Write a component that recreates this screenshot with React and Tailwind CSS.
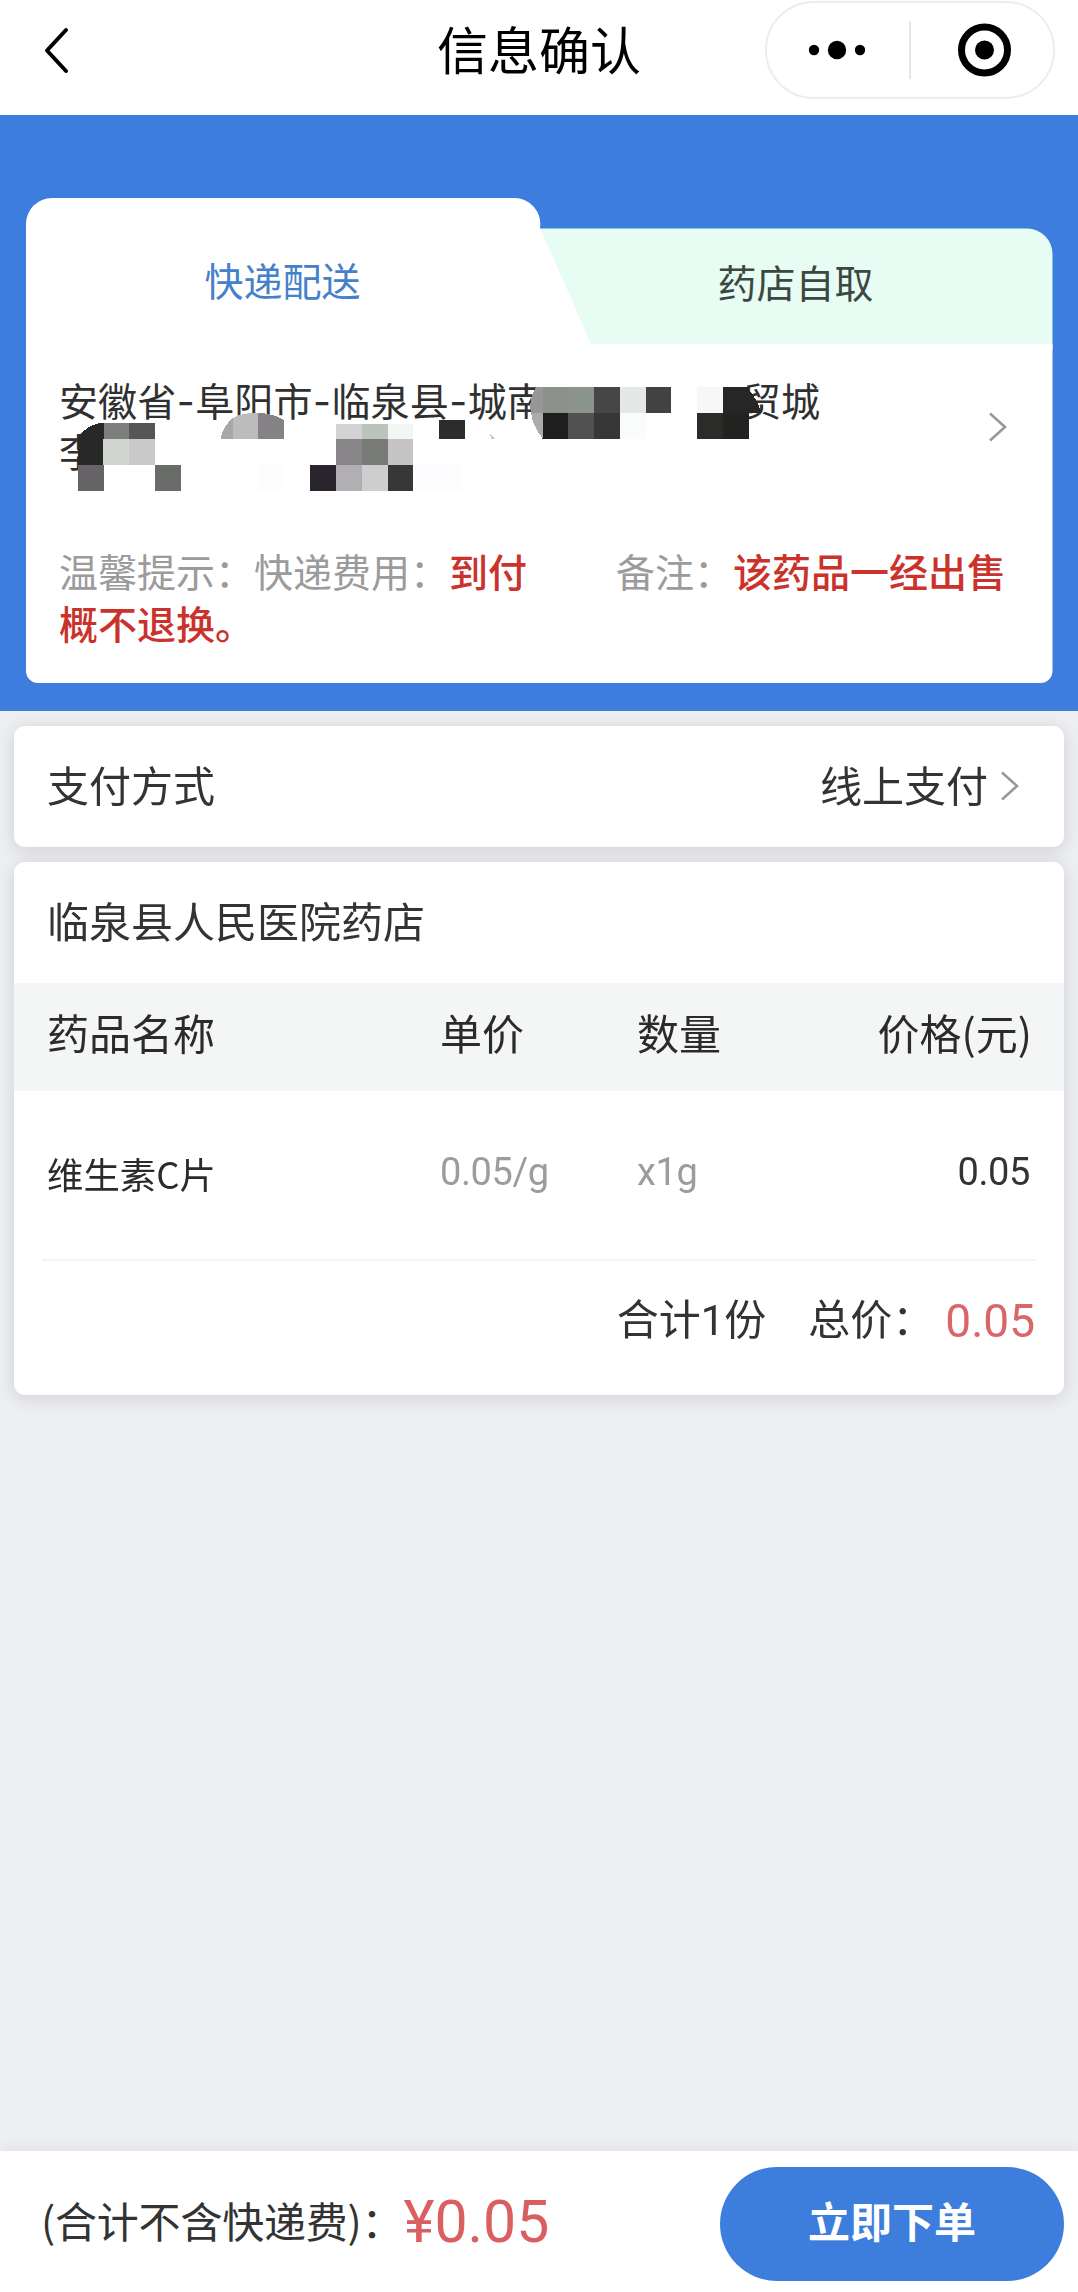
const goods = [
    { name: '维生素C片', unit: '0.05/g', qty: 'x1g', price: '0.05' },
]

// [x, y, width, height, color]
const mosaic = [
    [103.3, 422.5, 26, 16.5, '#7e7e7e'],
    [129.1, 422.5, 26, 16.5, '#565656'],
    [77.5, 438.8, 26, 26, '#282828'],
    [103.3, 438.8, 26, 26, '#d1d5cf'],
    [129.1, 438.8, 26, 26, '#cac8ca'],
    [77.5, 464.8, 26, 26, '#666467'],
    [155, 464.8, 26, 26, '#6a6c6a'],
    [335.8, 424, 26, 15, '#d3d3d3'],
    [361.6, 424, 26, 15, '#bbc4bb'],
    [387.5, 424, 25.8, 15, '#f3f7f3'],
    [335.8, 438.8, 26, 26, '#878588'],
    [361.6, 438.8, 26, 26, '#777a77'],
    [387.5, 438.8, 25.8, 26, '#c6c4c7'],
    [310, 464.8, 26, 26, '#2a242c'],
    [335.8, 464.8, 26, 26, '#b1afb3'],
    [361.6, 464.8, 26, 26, '#cdcecd'],
    [387.5, 464.8, 25.8, 26, '#373737'],
    [413.3, 464.8, 49, 26, '#fdfcff'],
    [258, 464.8, 26, 26, '#fefcff'],
    [439, 420, 26, 18.8, '#2a2d2a'],
    [542.2, 387.2, 26, 26, '#8b908b'],
    [568, 387.2, 26, 26, '#8b958c'],
    [593.8, 387.2, 26, 26, '#464646'],
    [619.5, 387.2, 26, 26, '#e4e9e6'],
    [645.5, 387.2, 25.8, 26, '#424242'],
    [697, 387.2, 26, 26, '#f7f7f7'],
    [723, 387.2, 26, 26, '#262626'],
    [542.2, 413, 26, 25.8, '#1e1e1e'],
    [568, 413, 26, 25.8, '#525152'],
    [593.8, 413, 26, 25.8, '#383738'],
    [619.5, 413, 26, 25.8, '#fafcfb'],
    [697, 413, 26, 25.8, '#2b2c2a'],
    [723, 413, 25.8, 25.8, '#222220'],
]

const Arrow = ({ className }) => (
    <svg className={className} width="20" height="30" viewBox="0 0 20 30" fill="none" stroke="#999" strokeWidth="2.6">
        <path d="M2 1.5 L17 15 L2 28.5" />
    </svg>
)

const Header = () => (
    <div className="flex items-center h-[115px] bg-white pb-4 pl-[43px] pr-[23px]">
        <svg width="28" height="50" viewBox="0 0 28 50" fill="none" stroke="#000" strokeWidth="4" strokeLinecap="round" strokeLinejoin="round">
            <path d="M23 5 L4 25.500 L23 46" />
        </svg>
        <h1 className="flex-1 text-center text-[51px] leading-none pl-[242px] pb-[3px] text-black">信息确认</h1>
        <div className="flex items-center w-[290px] h-[98px] border-2 border-[#ededed] rounded-full">
            <svg width="286" height="94" viewBox="767 3 286 94">
                <circle cx="814" cy="50" r="5.200" />
                <circle cx="837" cy="50" r="9.200" />
                <circle cx="860" cy="50" r="5.200" />
                <path d="M910 21 V79" stroke="#dedede" strokeWidth="1.500" />
                <circle cx="984.5" cy="50" r="23" fill="none" stroke="#000" strokeWidth="7" />
                <circle cx="984.5" cy="50" r="9.500" />
            </svg>
        </div>
    </div>
)

const Hyphen = () => <span className="inline-block w-[19px] text-center font-['Inter']">-</span>

const Delivery = () => (
    <div className="h-[596px] bg-[#3d7dde] pt-[83px] px-[26px]">
        <div className="relative h-[485px]">
            <svg className="absolute left-0 top-0" width="1027" height="485" viewBox="26 198 1027 485">
                <path d="M500 228.500 H1027 A25.500 25.500 0 0 1 1052.500 254 V350 H500 Z" fill="#e7fcf3" />
                <path d="M26 224 A26 26 0 0 1 52 198 H514 A26 26 0 0 1 540 228 L591 344 H1052.500 V671 A12 12 0 0 1 1040.500 683 H38 A12 12 0 0 1 26 671 Z" fill="#fff" />
            </svg>
            <div className="relative flex text-[39px] leading-none pt-[62px]">
                <span className="w-[513px] text-center text-[#4680cb]">快递配送</span>
                <span className="w-[513px] text-center text-[#3b4842] pt-[2px]">药店自取</span>
            </div>
            <div className="relative flex justify-between pl-[33px] pr-[44px] mt-[74px]">
                <div className="h-[104px] text-[39.1px] leading-[48px] text-[#303030]">
                    <p className="whitespace-nowrap">
                        安徽省<Hyphen />阜阳市<Hyphen />临泉县<Hyphen />城南
                        <span className="inline-block w-[196px]"></span>贸城
                    </p>
                    <p>李</p>
                </div>
                <Arrow className="mt-[37px]" />
            </div>
            <p className="relative text-[39px] leading-[52px] pl-[33px] mt-[65px] text-[#9b9b9b]">
                温馨提示：快递费用：
                <span className="text-[#cb322b] font-medium">到付</span>
                <span className="inline-block w-[89px]"></span>
                备注：<span className="text-[#cb322b] font-medium">该药品一经出售<br />概不退换。</span>
            </p>
            <svg className="absolute left-0 top-0" width="1027" height="485" viewBox="26 198 1027 485" shapeRendering="crispEdges">
                {mosaic.map(([x, y, w, h, fill], index) => (
                    <rect key={index} x={x} y={y} width={w} height={h} fill={fill} />
                ))}
                <path d="M77.500 439 V437 Q88 424 103.500 422.500 V439 Z" fill="#282828" />
                <path d="M220.500 438.800 Q223 426 233 418 V438.800 Z" fill="#a8a8a8" />
                <path d="M232.500 438.800 V418 Q244 412 258.500 413 V438.800 Z" fill="#bcbcbc" />
                <path d="M258 438.800 V413 Q272 413 284 420 V438.800 Z" fill="#858385" />
                <path d="M542.500 387.200 H536 Q528 400 531 413 H542.500 Z" fill="#979797" />
                <path d="M531 413 H542.500 V438 Q533 427 531 413 Z" fill="#ababab" />
                <path d="M748.500 390 Q757 398 761 413 H748.500 Z" fill="#262626" />
                <path d="M490 433 L495.500 438.800 H491 Z" fill="#ccc" />
            </svg>
        </div>
    </div>
)

const Payment = () => (
    <div className="flex items-center h-[121px] bg-white rounded-[11px] pl-[33px] pr-[44px]">
        <span className="pb-[6px]">支付方式</span>
        <span className="ml-auto pb-[6px]">线上支付</span>
        <Arrow className="ml-3 mb-[2px]" />
    </div>
)

const Order = () => (
    <div className="h-[533px] bg-white rounded-[11px]">
        <h2 className="h-[121px] leading-[115px] pl-[33px]">临泉县人民医院药店</h2>
        <div className="flex items-center h-[108px] pb-[11px] bg-[#f4f5f5] pl-[33px] pr-[32px] text-[#2b2b2b]">
            <span className="w-[393px]">药品名称</span>
            <span className="w-[197px]">单价</span>
            <span>数量</span>
            <span className="ml-auto">价格(元)</span>
        </div>
        {goods.map((item, index) => (
            <div key={index} className="flex items-center h-[170px] mx-[28px] pl-[5px] pr-[6px] pb-[4px] border-b-2 border-[#f4f4f4] font-['Roboto'] text-[38px] tracking-[-0.4px] text-[#9c9c9c]">
                <span className="w-[393px] text-[36.4px] tracking-normal text-[#2b2b2b] font-['Noto_Sans_CJK_SC']">{item.name}</span>
                <span className="w-[197px] pb-[2px]">{item.unit}</span>
                <span className="pb-[2px]">{item.qty}</span>
                <span className="ml-auto pb-[2px] text-[#333]">{item.price}</span>
            </div>
        ))}
        <div className="flex items-center justify-end h-[120px] pr-[29px]">
            <div className="flex items-baseline leading-[60px] pb-[4px]">
                <span>合计<span className="font-['Roboto']">1</span>份</span>
                <span className="ml-[42px]">总价：</span>
            </div>
            <span className="ml-[11px] font-['Roboto'] text-[46px] text-[#d9676a]">0.05</span>
        </div>
    </div>
)

const Footer = () => (
    <div className="flex items-center h-[141px] bg-white pl-[41px] pr-[14px] shadow-[0_-4px_14px_rgba(0,0,0,0.05)]">
        <span className="pb-[5px] tracking-[-0.2px]">(合计不含快递费)：</span>
        <span className="font-['Roboto'] text-[59px] leading-none text-[#da5f61]">¥0.05</span>
        <button className="ml-auto w-[344px] h-[114px] mb-[-4px] pb-[9px] rounded-full bg-[#3d7ddc] text-white font-bold">立即下单</button>
    </div>
)

export default function App() {
    return (
        <div className="flex flex-col w-[1078px] h-[2292px] overflow-hidden bg-[#eeeff3] text-[42px] text-[#333] font-['Noto_Sans_CJK_SC',sans-serif]">
            <Header />
            <Delivery />
            <div className="flex flex-col gap-[15px] pt-[15px] pl-[14px] pr-[14px] drop-shadow-[0_3px_9px_rgba(0,0,0,0.13)]">
                <Payment />
                <Order />
            </div>
            <div className="mt-auto">
                <Footer />
            </div>
        </div>
    )
}
